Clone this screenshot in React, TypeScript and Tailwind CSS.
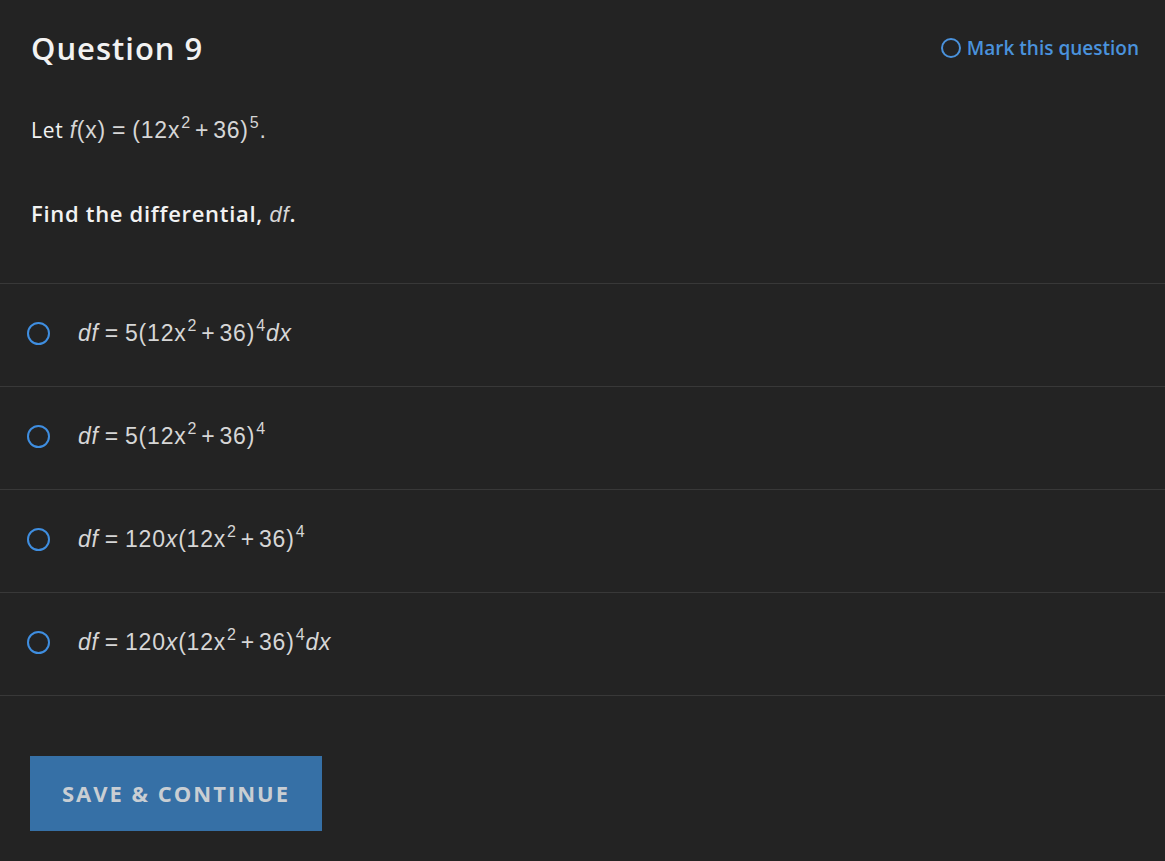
import type { ReactNode } from "react";

const MATH = "font-['Liberation_Sans',Arial,sans-serif] text-[#d6d6d6] tracking-[0.8px]";

function Sup({ children }: { children: ReactNode }) {
  return <sup className="relative top-[-0.62em] ml-[1px] text-[16px] leading-none">{children}</sup>;
}

function I({ children }: { children: ReactNode }) {
  return <span className="italic">{children}</span>;
}

function Eq() {
  return <span className="mx-[6px]">=</span>;
}

function Plus() {
  return <span className="mx-[4px]">+</span>;
}

const options: ReactNode[] = [
  <>
    <I>df</I>
    <Eq />5(12x<Sup>2</Sup>
    <Plus />
    36)<Sup>4</Sup>
    <I>dx</I>
  </>,
  <>
    <I>df</I>
    <Eq />5(12x<Sup>2</Sup>
    <Plus />
    36)<Sup>4</Sup>
  </>,
  <>
    <I>df</I>
    <Eq />120<I>x</I>(12x<Sup>2</Sup>
    <Plus />
    36)<Sup>4</Sup>
  </>,
  <>
    <I>df</I>
    <Eq />120<I>x</I>(12x<Sup>2</Sup>
    <Plus />
    36)<Sup>4</Sup>
    <I>dx</I>
  </>,
];

export default function App() {
  return (
    <div className="min-h-[861px] w-full bg-[#232323] font-['Open_Sans','Noto_Sans',sans-serif] text-[#f2f2f2]">
      {/* header + prompt */}
      <div className="px-[31px] pt-[29px]">
        <div className="flex items-center justify-between">
          <h1 className="text-[31px] font-semibold leading-[38px] tracking-[1px]">Question 9</h1>
          <button type="button" className="mr-[-5px] flex items-center gap-[6px] text-[19px] font-semibold text-[#4a92dc]">
            <span className="h-[20px] w-[20px] rounded-full border-[2.5px] border-[#4a92dc]" />
            Mark this question
          </button>
        </div>

        <p className="mt-[48px] flex items-baseline text-[21px] leading-[30px] tracking-[0.8px]">
          <span className="mr-[6px]">Let</span>
          <span className={`${MATH} text-[23px]`}>
            <I>f</I>(x)
            <Eq />
            (12x<Sup>2</Sup>
            <Plus />
            36)<Sup>5</Sup>.
          </span>
        </p>

        <p className="mt-[53px] pb-[53px] text-[22px] font-semibold leading-[30px] tracking-[0.7px]">
          Find the differential, <span className={`${MATH} font-normal italic`}>df</span>.
        </p>
      </div>

      {/* options */}
      <ul className="border-t border-[#383838]">
        {options.map((opt, i) => (
          <li key={i} className="flex h-[103px] items-center border-b border-[#383838] pl-[27px]">
            <span className="mb-[3px] h-[23px] w-[23px] shrink-0 rounded-full border-[2.5px] border-[#3f8ee0]" />
            <span className={`${MATH} mb-[4px] ml-[28px] text-[23px] leading-[30px]`}>{opt}</span>
          </li>
        ))}
      </ul>

      <div className="px-[30px] pt-[60px] pb-[30px]">
        <button
          type="button"
          className="h-[75px] w-[292px] bg-[#3670a6] text-[22px] font-bold uppercase tracking-[2px] text-[#c9ced3]"
        >
          Save &amp; Continue
        </button>
      </div>
    </div>
  );
}
